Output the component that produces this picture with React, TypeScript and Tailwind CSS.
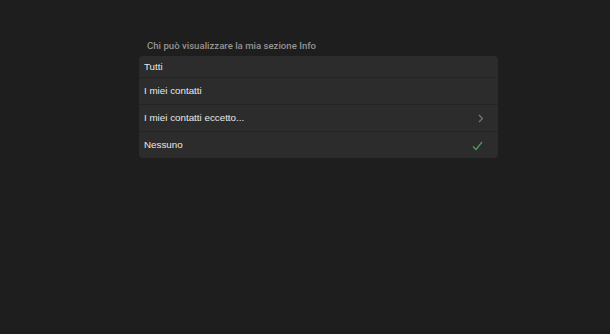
import React from "react";

const rows = [
  { label: "Tutti", h: "h-[21px]", right: null as null | "chev" | "check" },
  { label: "I miei contatti", h: "h-[27px]", right: null },
  { label: "I miei contatti eccetto...", h: "h-[27px]", right: "chev" },
  { label: "Nessuno", h: "h-[27px]", right: "check" },
];

export default function App() {
  return (
    <div
      className="w-[610px] h-[334px] bg-[#1e1e1e] overflow-hidden"
      style={{ fontFamily: '"Liberation Sans", Arial, sans-serif' }}
    >
      <div className="pt-[40px] pl-[139px]">
        <div
          className="pl-[8px] h-[16px] text-[9.6px] font-medium text-[#949494] leading-[12px]"
          style={{ fontFamily: 'Roboto, "Liberation Sans", sans-serif' }}
        >
          Chi può visualizzare la mia sezione Info
        </div>
        <div className="w-[359px] bg-[#2c2c2c] rounded-[4px] overflow-hidden">
          {rows.map((r, i) => (
            <div
              key={i}
              className={`${r.h} flex items-center pl-[5px] pr-[13px] pt-[1px] text-[9.8px] text-[#e8e8e8] ${
                i > 0 ? "border-t border-[#252525]" : ""
              }`}
            >
              <span className="flex-1">{r.label}</span>
              {r.right === "chev" && (
                <svg width="6" height="9" viewBox="0 0 6 9" className="mr-[1px]">
                  <path d="M1 1 L4.5 4.5 L1 8" fill="none" stroke="#7a7a7a" strokeWidth="1.1" />
                </svg>
              )}
              {r.right === "check" && (
                <svg width="11" height="10" viewBox="0 0 11 10" className="mr-[2px]">
                  <path d="M1 5.5 L4 8.5 L10 1" fill="none" stroke="#4f9a5e" strokeWidth="1.3" />
                </svg>
              )}
            </div>
          ))}
        </div>
      </div>
    </div>
  );
}
